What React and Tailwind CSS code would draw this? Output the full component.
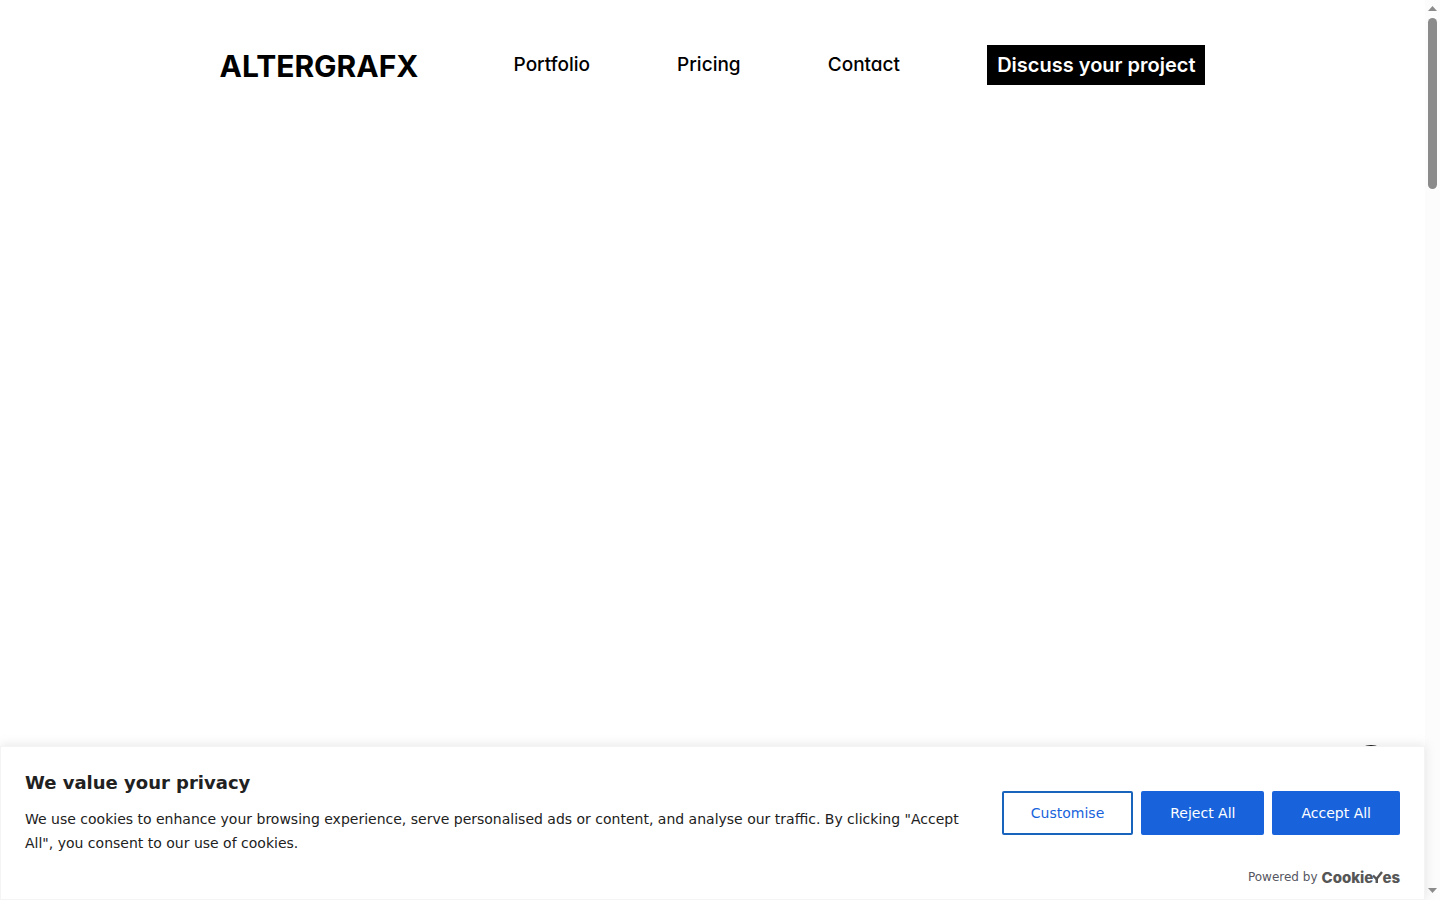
import React from 'react';

const navLinks = ['Portfolio', 'Pricing', 'Contact'];

const Header = () => (
  <header className="mx-auto flex h-[130px] w-full max-w-[986px] items-center justify-between font-['Inter',sans-serif] text-xl text-black">
    <a href="#home" className="pr-2 pt-0.5 text-[30px] font-bold">
      ALTERGRAFX
    </a>
    {navLinks.map((link) => (
      <a
        key={link}
        href={`#${link.toLowerCase()}`}
        className="text-[19px] font-medium [font-feature-settings:'cv11']"
      >
        {link}
      </a>
    ))}
    <a href="#discuss" className="flex h-10 items-center bg-black px-2.5 font-semibold text-white">
      Discuss your project
    </a>
  </header>
);

const CookieYesLogo = () => (
  <a
    href="#cookieyes"
    aria-label="CookieYes"
    className="flex items-center pt-0.5 font-['Inter',sans-serif] text-[15px] font-extrabold leading-5 text-[#565656]"
  >
    <span>Cookie</span>
    <svg width="11" height="16" viewBox="0 0 11 16" className="-mx-px" aria-hidden="true">
      <path d="M1 5.500 4.500 9 10 2" fill="none" stroke="currentColor" strokeWidth="2.400" />
      <path d="M3.500 9h2.500v4H3.500z" fill="currentColor" />
    </svg>
    <span>es</span>
  </a>
);

const CookieBanner = () => (
  <section
    aria-labelledby="cookie-title"
    className="relative border border-[#f4f4f4] bg-white px-6 pt-6 text-[#212121] shadow-[0_-1px_10px_0_#acabab4d]"
  >
    <h2 id="cookie-title" className="mb-3 text-lg font-bold leading-6">
      We value your privacy
    </h2>
    <div className="flex items-center justify-between gap-8">
      <p className="flex-1 text-sm leading-6">
        We use cookies to enhance your browsing experience, serve personalised ads or content, and
        analyse our traffic. By clicking &quot;Accept All&quot;, you consent to our use of cookies.
      </p>
      <div className="-mt-4 flex items-center gap-2 self-start text-sm leading-6">
        <button
          type="button"
          className="h-11 rounded-xs border-2 border-[#1863bc] bg-white px-[27px] text-[#1863dc]"
        >
          Customise
        </button>
        <button
          type="button"
          className="h-11 rounded-xs border-2 border-[#1863dc] bg-[#1863dc] px-[27px] text-white"
        >
          Reject All
        </button>
        <button
          type="button"
          className="h-11 rounded-xs border-2 border-[#1863dc] bg-[#1863dc] px-[27px] text-white"
        >
          Accept All
        </button>
      </div>
    </div>
    <div className="flex h-11 items-center justify-end gap-1 text-xs text-[#565662]">
      <span>Powered by</span>
      <CookieYesLogo />
    </div>
  </section>
);

const Scrollbar = () => (
  <div className="flex w-[15px] flex-col items-center justify-between bg-[#fcfcfc]" aria-hidden="true">
    <div className="flex flex-col items-center">
      <svg width="15" height="18" viewBox="0 0 15 18" fill="#8b8b8b">
        <path d="M3 11h9L7.500 6z" />
      </svg>
      <div className="h-[171px] w-[9px] rounded-full bg-[#8b8b8b]" />
    </div>
    <svg width="15" height="18" viewBox="0 0 15 18" fill="#8b8b8b">
      <path d="M3 6h9l-4.500 5z" />
    </svg>
  </div>
);

const App = () => (
  <div className="flex min-h-screen bg-white font-['DejaVu_Sans',sans-serif]">
    <div className="flex min-w-0 flex-1 flex-col">
      <Header />
      <main className="flex-1" />
      <div className="relative">
        {/* floating button, mostly tucked behind the banner */}
        <div className="absolute -top-px right-8 size-11 rounded-full bg-black" />
        <CookieBanner />
      </div>
    </div>
    <Scrollbar />
  </div>
);

export default App;
